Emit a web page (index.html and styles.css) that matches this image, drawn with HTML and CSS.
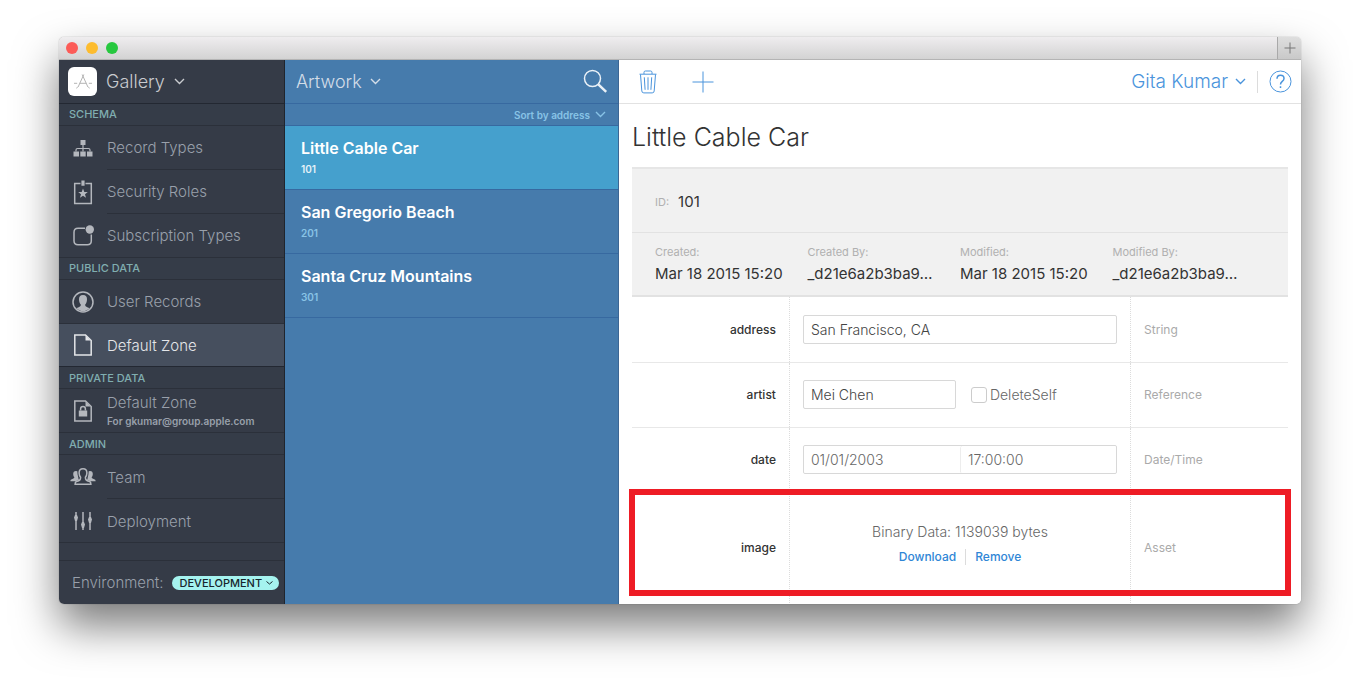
FILE: index.html
```html
<!DOCTYPE html>
<html lang="en">
<head>
<meta charset="utf-8">
<title>Gallery – Artwork</title>
<link rel="stylesheet" href="styles.css">
</head>
<body>
<div class="window">
  <header class="titlebar">
    <div class="lights"><span class="light red"></span><span class="light amber"></span><span class="light green"></span></div>
    <button class="new-tab" aria-label="New tab"><svg width="12" height="12" viewBox="0 0 12 12"><path d="M6 .5v11M.5 6h11"/></svg></button>
  </header>

  <div class="panes">
    <nav class="sidebar">
      <button class="app-picker">
        <span class="app-icon"><svg width="20" height="18" viewBox="0 0 20 18"><path d="M9.200 1.500 14.900 14M10.800 1.500 5.100 14M1 10.300h3.200M6.500 10.300h7M15.800 10.300H19M3.600 15.400l1-1.600M16.400 15.400l-1-1.600"/></svg></span>
        <span>Gallery</span>
        <svg class="chevron" width="11" height="7" viewBox="0 0 11 7"><path d="m1 1 4.500 4.500L10 1"/></svg>
      </button>
      <h2 class="section">Schema</h2>
      <a class="item" href="#record-types">
        <svg class="icon solid" width="22" height="22" viewBox="0 0 22 22"><path d="M8.500 3h5v5h-5zM1.500 14.500H7v5H1.500zM8.300 14.500h5.400v5H8.300zM15 14.500h5.500v5H15z"/><path class="line" d="M11 8v6.500M4 14.500V13q0-1.500 1.500-1.500h11q1.500 0 1.500 1.500v1.500"/></svg>
        <span>Record Types</span>
      </a>
      <a class="item inset" href="#security-roles">
        <svg class="icon" width="22" height="26" viewBox="0 0 22 26"><path d="M8.500 4.500H2.700v20h16.600v-20h-5.800"/><path class="fill" d="M9.400 1.500h3.200v5.300H9.400zM11 9.500l1.300 3.400 3.500.1-2.800 2.200 1 3.500-3-2-3 2 1-3.500-2.800-2.200 3.500-.1z"/></svg>
        <span>Security Roles</span>
      </a>
      <a class="item inset" href="#subscription-types">
        <svg class="icon" width="22" height="22" viewBox="0 0 22 22"><path d="M13 3.200H6Q2 3.200 2 7.200v8.600q0 4 4 4h9.300q4 0 4-4V9.500"/><circle class="fill" cx="17.800" cy="4.500" r="4.200"/></svg>
        <span>Subscription Types</span>
      </a>
      <h2 class="section">Public Data</h2>
      <a class="item" href="#user-records">
        <svg class="icon" width="22" height="22" viewBox="0 0 22 22"><circle cx="11" cy="11" r="10"/><path class="fill" d="M11 4c-3 0-4 1.800-4 4.200 0 2.800.9 4.300 1.800 5.200 0 1.800-.5 2.200-4.500 3.700C6 19 8.300 20.200 11 20.200s5-1.200 6.700-3.100c-4-1.500-4.500-1.900-4.500-3.700.9-.9 1.800-2.400 1.800-5.200C15 5.800 14 4 11 4z"/></svg>
        <span>User Records</span>
      </a>
      <a class="item active" href="#default-zone" aria-current="page">
        <svg class="icon" width="22" height="22" viewBox="0 0 22 22"><path d="M2.800 1h10.700l5.700 5.500V21H2.800z"/><path class="fill" d="M13.500 1.500v5h5z"/></svg>
        <span>Default Zone</span>
      </a>
      <h2 class="section">Private Data</h2>
      <a class="item" href="#private-zone">
        <svg class="icon" width="22" height="22" viewBox="0 0 22 22"><path d="M2.800 1h10.700l5.700 5.500V21H2.800z"/><path class="fill" d="M13.500 1.500v5h5zM6.800 10.500h8.400v6H6.800z"/><path d="M8.600 10.500V8.800a2.400 2.400 0 0 1 4.800 0v1.700"/></svg>
        <span class="stack"><span>Default Zone</span><small>For gkumar@group.apple.com</small></span>
      </a>
      <h2 class="section">Admin</h2>
      <a class="item" href="#team">
        <svg class="icon" width="26" height="20" viewBox="0 0 26 20"><path class="fill" d="M6 4c-1.900 0-2.800 1.200-2.800 2.900 0 1.600.6 2.500 1.100 3.200 0 1.100-.3 1.500-3 2.300-.8.300-.9 1-.9 1.800h5.400l3.300-1.700c-.9-.7-.7-1.200-.7-1.500l-.8-3.600L7.300 4.300zM20 4c1.900 0 2.800 1.200 2.800 2.900 0 1.600-.6 2.500-1.100 3.200 0 1.100.3 1.500 3 2.300.8.300.9 1 .9 1.800h-5.400l-3.300-1.700c.9-.7.7-1.200.7-1.500l.8-3.600.3-3.100z"/><path d="M13 1.800c-2.700 0-3.900 1.700-3.900 4.100 0 2.200.7 3.300 1.500 4.300 0 2.600-.5 3.100-4.300 4.300-1.100.4-1.200 1.200-1.200 2.700h15.800c0-1.500-.1-2.300-1.200-2.700-3.800-1.200-4.300-1.700-4.300-4.300.8-1 1.500-2.100 1.500-4.300 0-2.400-1.200-4.100-3.900-4.100z"/></svg>
        <span>Team</span>
      </a>
      <a class="item inset" href="#deployment">
        <svg class="icon" width="22" height="22" viewBox="0 0 22 22"><path d="M4 2v18M11 2v18M18 2v18"/><path class="fill" d="M2 7.500 3 5h2l1 2.500L5 11H3zM9 14.500l1-2.500h2l1 2.500-1 3.500h-2zM16 9.500 17 7h2l1 2.500-1 3.500h-2z"/></svg>
        <span>Deployment</span>
      </a>
      <div class="spacer"></div>
      <div class="environment">
        <span>Environment:</span>
        <button class="pill">Development <svg width="7" height="4" viewBox="0 0 7 4"><path d="m.5.5 3 2.500 3-2.500"/></svg></button>
      </div>
    </nav>

    <section class="records">
      <div class="records-head">
        <button class="type-picker">Artwork <svg class="chevron" width="11" height="7" viewBox="0 0 11 7"><path d="m1 1 4.500 4.500L10 1"/></svg></button>
        <button class="search" aria-label="Search"><svg width="26" height="26" viewBox="0 0 26 26"><circle cx="10.500" cy="9.500" r="8"/><path class="handle" d="m16.300 15.300 7.900 7.500"/></svg></button>
      </div>
      <div class="sort"><button>Sort by address <svg class="chevron" width="11" height="7" viewBox="0 0 11 7"><path d="m1 1 4.500 4.500L10 1"/></svg></button></div>
      <a class="record selected" href="#101"><strong>Little Cable Car</strong><small>101</small></a>
      <a class="record" href="#201"><strong>San Gregorio Beach</strong><small>201</small></a>
      <a class="record" href="#301"><strong>Santa Cruz Mountains</strong><small>301</small></a>
    </section>

    <main class="detail">
      <div class="toolbar">
        <button aria-label="Delete record"><svg width="20" height="26" viewBox="0 0 20 26"><path d="M1.500 5.200h17M6 5V3.400Q6 2 7.400 2h5.200Q14 2 14 3.400V5M2.500 5.500l1.300 16.400q.1 2 2 2h8.400q1.900 0 2-2L17.500 5.500M6.300 8.300l.8 12.500M10 8.300v12.500M13.700 8.300l-.8 12.500"/></svg></button>
        <button aria-label="New record"><svg width="22" height="22" viewBox="0 0 22 22"><path d="M11 .5v21M.5 11h21"/></svg></button>
        <button class="account">Gita Kumar <svg class="chevron" width="11" height="7" viewBox="0 0 11 7"><path d="m1 1 4.500 4.500L10 1"/></svg></button>
        <button class="help" aria-label="Help"><svg width="23" height="23" viewBox="0 0 23 23"><circle cx="11.500" cy="11.500" r="10.500"/><path class="mark" d="M8 8.800c0-2.200 1.300-3.500 3.500-3.500S15 6.500 15 8.500c0 3-3.500 2.900-3.500 6"/><path class="mark" d="M11.500 16.200v1.700"/></svg></button>
      </div>

      <div class="content">
        <h1>Little Cable Car</h1>
        <dl class="meta">
          <div class="meta-id"><dt>ID:</dt><dd>101</dd></div>
          <div class="meta-grid">
            <div><dt>Created:</dt><dd>Mar 18 2015 15:20</dd></div>
            <div><dt>Created By:</dt><dd>_d21e6a2b3ba9…</dd></div>
            <div><dt>Modified:</dt><dd>Mar 18 2015 15:20</dd></div>
            <div><dt>Modified By:</dt><dd>_d21e6a2b3ba9…</dd></div>
          </div>
        </dl>

        <table class="fields">
          <tbody>
            <tr>
              <th scope="row"><label for="address">address</label></th>
              <td><input class="text" id="address" type="text" value="San Francisco, CA"></td>
              <td class="kind">String</td>
            </tr>
            <tr>
              <th scope="row"><label for="artist">artist</label></th>
              <td><div class="reference"><input class="text" id="artist" type="text" value="Mei Chen"><label class="check"><input type="checkbox">DeleteSelf</label></div></td>
              <td class="kind">Reference</td>
            </tr>
            <tr>
              <th scope="row"><label for="date">date</label></th>
              <td><div class="datetime"><input class="text" id="date" type="text" value="01/01/2003"><input class="text" type="text" aria-label="time" value="17:00:00"></div></td>
              <td class="kind">Date/Time</td>
            </tr>
            <tr class="asset">
              <th scope="row">image</th>
              <td><div class="binary"><span>Binary Data: 1139039 bytes</span><span class="links"><a href="#download">Download</a><a href="#remove">Remove</a></span></div></td>
              <td class="kind">Asset</td>
            </tr>
          </tbody>
        </table>
      </div>
    </main>
  </div>
</div>
</body>
</html>
```
FILE: styles.css
```css
* { box-sizing: border-box; }

body {
  margin: 0;
  min-height: 100vh;
  display: flex;
  padding: 37px 59px 84px;
  background: #fff;
  font-family: Inter, "Liberation Sans", sans-serif;
  font-size: 15px;
  font-weight: 300;
}

button {
  margin: 0;
  padding: 0;
  border: 0;
  background: none;
  color: inherit;
  font: inherit;
  display: flex;
  align-items: center;
}

a { color: inherit; text-decoration: none; }
svg { display: block; flex: none; fill: none; stroke: currentColor; }

.window {
  flex: 1;
  display: flex;
  flex-direction: column;
  border-radius: 5px;
  overflow: hidden;
  box-shadow: 0 0 1px rgba(0, 0, 0, .5), 0 22px 44px rgba(0, 0, 0, .52);
}

.titlebar {
  height: 23px;
  flex: none;
  display: flex;
  justify-content: space-between;
  align-items: stretch;
  border-bottom: 1px solid #b4b4b4;
  background: linear-gradient(#efedef, #d3d3d3);
}
.lights { display: flex; align-items: center; gap: 8px; padding-left: 7px; }
.light { width: 12px; height: 12px; border-radius: 50%; }
.red { background: #fc5b57; }
.amber { background: #fdbc2e; }
.green { background: #27c83f; }
.new-tab {
  width: 24px;
  justify-content: center;
  border-left: 1px solid #a9a9a9;
  background: linear-gradient(#dedede, #c9c9c9);
  color: #777;
}

.panes {
  flex: 1;
  display: grid;
  grid-template-columns: 226px 334px 1fr;
}
.chevron { stroke-width: 1.4; }

/* Sidebar */
.sidebar {
  display: flex;
  flex-direction: column;
  height: 0;
  min-height: 100%;
  border-right: 1px solid #20252e;
  background: #353b47;
  color: #99a0ab;
}
.app-picker {
  flex: none;
  height: 44px;
  gap: 9px;
  padding-left: 9px;
  border-bottom: 1px solid #232832;
  color: #c9cbcf;
  font-size: 18px;
}
.app-icon {
  width: 29px;
  height: 29px;
  display: grid;
  place-items: center;
  border-radius: 6px;
  background: #fff;
  color: #b4b4b4;
}
.section {
  flex: 0 1 22px;
  display: flex;
  align-items: center;
  margin: 0;
  padding-left: 10px;
  border-bottom: 1px solid #2b303a;
  background: #353c48;
  color: #80aeb0;
  font-size: 11px;
  font-weight: 500;
  text-transform: uppercase;
}
.item {
  flex: 0 1 44px;
  min-height: 0;
  display: grid;
  grid-template-columns: 48px 1fr;
  align-items: center;
  background: linear-gradient(#2b303a, #2b303a) bottom / 100% 1px no-repeat;
}
.item:has(+ .inset) { background-position: 48px bottom; }
.icon { justify-self: center; color: #b4b7bd; stroke-width: 1.5; }
.icon .fill, .solid { fill: currentColor; stroke: none; }
.icon .line { fill: none; stroke: currentColor; stroke-width: 1.2; }
.active { background: #464f5e linear-gradient(#232832, #232832) bottom / 100% 1px no-repeat; color: #e4e6e9; }
.active .icon { color: #e4e6e9; }
.stack { display: grid; gap: 2px; line-height: 18px; }
.stack small { font-size: 10px; font-weight: 600; line-height: 14px; }
.spacer { flex: 1 1 18px; border-bottom: 1px solid #2b303a; }
.environment {
  flex: none;
  height: 43px;
  display: flex;
  align-items: center;
  gap: 8px;
  padding-left: 13px;
}
.pill {
  height: 14px;
  gap: 4px;
  padding: 0 6px 0 8px;
  border-radius: 7px;
  background: #a5f3ef;
  color: #17252b;
  font-size: 11px;
  font-weight: 500;
  text-transform: uppercase;
}

/* Record list */
.records {
  display: flex;
  flex-direction: column;
  border-right: 1px solid #3c6694;
  background: #467bac;
  color: #fff;
}
.records-head {
  height: 44px;
  display: flex;
  justify-content: space-between;
  align-items: center;
  padding: 0 10px 0 11px;
  border-bottom: 1px solid #3769a0;
}
.type-picker { gap: 8px; color: #d3dde8; font-size: 18px; }
.search { color: #eaf1f7; stroke-width: 1.5; }
.handle { stroke-width: 2.5; }
.sort {
  height: 22px;
  display: flex;
  justify-content: flex-end;
  padding-right: 12px;
  border-bottom: 1px solid #3769a0;
  color: #88c3e6;
  font-size: 10px;
  font-weight: 600;
}
.sort button { gap: 5px; }
.record {
  height: 64px;
  display: flex;
  flex-direction: column;
  justify-content: center;
  gap: 4px;
  padding: 0 16px 1px;
  border-bottom: 1px solid #3769a0;
}
.record strong { font-size: 16px; font-weight: 600; line-height: 20px; }
.record small { color: #88c3e6; font-size: 10px; font-weight: 600; line-height: 14px; }
.selected { background: #45a0cd; }
.record.selected small { color: #e3f1f8; }

/* Detail */
.detail { background: #fff; color: #333; min-width: 0; }
.toolbar {
  height: 44px;
  display: flex;
  align-items: center;
  padding: 0 9px 0 19px;
  gap: 34px;
  border-bottom: 1px solid #e2e2e2;
  color: #4a94dc;
}
.toolbar svg { stroke-width: 1; }
.toolbar .account { gap: 7px; margin-left: auto; font-size: 19px; }
.account .chevron { stroke-width: 1.4; }
.toolbar .help { height: 22px; margin-left: -23px; padding-left: 11px; border-left: 1px solid #dcdcdc; }
.help .mark { stroke-width: 1.5; }

.content { padding: 0 13px; }
h1 { margin: 0; padding: 17px 0 14px; color: #333; font-size: 25px; font-weight: 300; line-height: 32px; }

.meta {
  margin: 0;
  border-top: 2px solid #e6e6e6;
  border-bottom: 2px solid #e2e2e2;
  background: #f1f1f1;
}
.meta dt { color: #b0b0b0; font-size: 11px; font-weight: 400; line-height: 14px; }
.meta dd { margin: 0; font-size: 15px; font-weight: 400; line-height: 20px; white-space: nowrap; }
.meta-id { height: 64px; display: flex; align-items: center; gap: 9px; padding: 3px 23px 0; border-bottom: 1px solid #e2e2e2; }
.meta-grid { height: 62px; display: grid; grid-template-columns: repeat(4, 1fr); align-items: center; padding: 0 23px; }
.meta-grid dt { padding-bottom: 4px; line-height: 16px; }

.fields { width: 100%; table-layout: fixed; border-collapse: collapse; }
.fields tr { height: 65px; border-bottom: 1px solid #e8e8e8; }
.fields th { width: 24%; padding: 0 13px 0 0; font-size: 12px; font-weight: 500; text-align: right; }
.fields td { padding: 0 13px; border-left: 1px dotted #dcdcdc; }
.fields .kind { width: 24%; color: #aaa; font-size: 12px; font-weight: 400; }
.text {
  width: 100%;
  height: 29px;
  display: block;
  padding: 0 7px;
  border: 1px solid #d8d8d8;
  border-radius: 2px;
  background: #fff;
  color: #444;
  font: inherit;
  font-size: 14px;
}
.reference { display: grid; grid-template-columns: 153px 1fr; align-items: center; gap: 15px; }
.check { display: flex; align-items: center; gap: 3px; color: #666; font-size: 14px; }
.check input { appearance: none; width: 16px; height: 16px; margin: 0; border: 1px solid #ccc; border-radius: 3px; }
.datetime { display: grid; grid-template-columns: 1fr 1fr; border: 1px solid #d8d8d8; border-radius: 2px; }
.datetime .text { height: 27px; border: 0; color: #666; }
.datetime .text + .text { border-left: 1px dotted #dcdcdc; }

.fields .asset { position: relative; height: 111px; border-bottom: 0; }
.asset th::before {
  content: "";
  position: absolute;
  inset: -3px -3px 7px;
  border: 6px solid #ee1c25;
  pointer-events: none;
}
.binary { display: grid; justify-items: center; gap: 7px; padding-bottom: 9px; color: #666; font-size: 14px; line-height: 20px; }
.links { display: flex; color: #2f86d6; font-size: 12px; font-weight: 500; line-height: 16px; }
.links a { padding: 0 9px; }
.links a + a { border-left: 1px solid #dcdcdc; }
```
